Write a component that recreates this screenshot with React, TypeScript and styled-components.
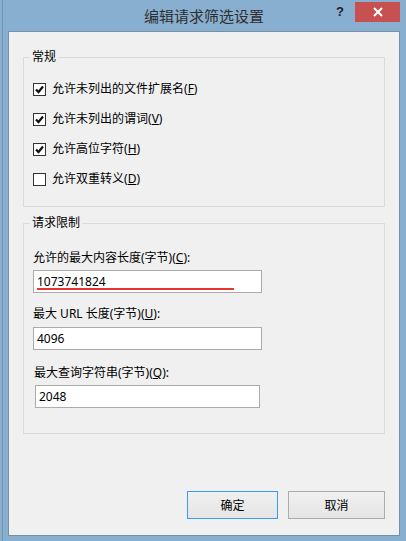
import React from 'react'
import styled, { createGlobalStyle } from 'styled-components';

const Global = createGlobalStyle`
    html, body {
        margin: 0;
        padding: 0;
    }

    body {
        font-family: "Noto Sans", "Noto Sans CJK SC", sans-serif;
        font-size: 12px;
        color: #000;
    }
`

const Frame = styled.div`
    width: 406px;
    height: 541px;
    box-sizing: border-box;
    padding: 0 6px 5px 8px;

    display: flex;
    flex-direction: column;

    background-color: #88afcf;
    background-image: linear-gradient(to right, transparent 2px, #7493ad 2px, #7493ad 3px, transparent 3px);
`

const TitleBar = styled.div`
    height: 31px;
    flex-shrink: 0;

    display: grid;
    grid-template-columns: 1fr auto 1fr;
`

const Title = styled.div`
    grid-column: 2;
    align-self: center;
    margin-top: 1px;

    font-size: 15px;
    line-height: 20px;
    color: #2e2e2e;
`

const Controls = styled.div`
    grid-column: 3;
    justify-self: end;

    display: flex;
    align-items: flex-start;
`

const Help = styled.span`
    margin: 5px 11px 0 0;

    font-family: "Liberation Sans", sans-serif;
    font-weight: bold;
    font-size: 13px;
    line-height: 14px;
    color: #1e1e1e;
`

const Close = styled.div`
    width: 45px;
    height: 20px;
    margin-top: 2px;

    display: flex;
    align-items: center;
    justify-content: center;

    background: #c75050;
`

const Client = styled.div`
    flex: 1;
    box-sizing: border-box;
    padding: 17px 14px 16px 14px;

    display: flex;
    flex-direction: column;

    background: #f0f0f0;
    border: 1px solid #7890a6;
`

const Group = styled.fieldset<{ $pad: string; $top?: number }>`
    margin: ${p => p.$top ?? 0}px 0 0 0;
    padding: ${p => p.$pad};
    min-width: 0;

    border: 1px solid #dcdcdc;
    border-radius: 0;
`

const Legend = styled.legend`
    margin-left: -3px;
    padding: 0 2px;

    line-height: 16px;
`

const CheckRow = styled.label`
    height: 30px;

    display: flex;
    align-items: center;
    gap: 6px;

    line-height: 16px;
`

const Box = styled.span`
    width: 11px;
    height: 11px;

    display: flex;
    align-items: center;
    justify-content: center;

    background: #fff;
    border: 1px solid #333;
`

const Field = styled.div<{ $top: number; $shift?: number }>`
    margin-top: ${p => p.$top}px;
    padding-left: ${p => p.$shift ?? 0}px;
`

const FieldLabel = styled.div<{ $gap: number }>`
    margin-bottom: ${p => p.$gap}px;

    line-height: 16px;
`

const InputWrap = styled.div<{ $width: number; $indent?: number }>`
    position: relative;
    width: ${p => p.$width}px;
    height: 23px;
    box-sizing: border-box;
    margin-left: ${p => p.$indent ?? 0}px;
    padding: 0 3px;

    display: flex;
    align-items: center;

    background: #fff;
    border: 1px solid #ababab;
`

const Mark = styled.span`
    position: absolute;
    left: 3px;
    top: 17px;

    width: 197px;
    height: 2px;

    background: #e8362f;
`

const Footer = styled.div`
    margin-top: auto;

    display: flex;
    justify-content: flex-end;
    gap: 10px;
`

const Button = styled.div<{ $width: number; $focus?: boolean }>`
    width: ${p => p.$width}px;
    height: 28px;
    box-sizing: border-box;

    display: flex;
    align-items: center;
    justify-content: center;

    background: linear-gradient(#f0f0f0, #e5e5e5);
    border: 1px solid ${p => (p.$focus ? '#3c99f8' : '#acacac')};
`

function Check({ on }: { on: boolean }) {
    return (
        <Box>
            {on && (
                <svg width="9" height="9" viewBox="0 0 9 9">
                    <path d="M1 4.5 L3.5 7 L8 1.5" fill="none" stroke="#111" strokeWidth="2.2" />
                </svg>
            )}
        </Box>
    )
}

const options: [string, string, boolean][] = [
    ['允许未列出的文件扩展名', 'F', true],
    ['允许未列出的谓词', 'V', true],
    ['允许高位字符', 'H', true],
    ['允许双重转义', 'D', false],
]

export default function App() {
    return (
        <Frame>
            <Global />
            <TitleBar>
                <Title>编辑请求筛选设置</Title>
                <Controls>
                    <Help>?</Help>
                    <Close>
                        <svg width="10" height="10" viewBox="0 0 10 10">
                            <path d="M1 1 L9 9 M9 1 L1 9" stroke="#fff" strokeWidth="2" />
                        </svg>
                    </Close>
                </Controls>
            </TitleBar>

            <Client>
                <Group $pad="9px 9px 12px 9px">
                    <Legend>常规</Legend>
                    {options.map(([text, key, on]) => (
                        <CheckRow key={key}>
                            <Check on={on} />
                            <span>{text}(<u>{key}</u>)</span>
                        </CheckRow>
                    ))}
                </Group>

                <Group $pad="0 9px 25px 9px" $top={8}>
                    <Legend>请求限制</Legend>
                    <Field $top={19}>
                        <FieldLabel $gap={4}>允许的最大内容长度(字节)(<u>C</u>):</FieldLabel>
                        <InputWrap $width={229}>
                            1073741824
                            <Mark />
                        </InputWrap>
                    </Field>
                    <Field $top={13}>
                        <FieldLabel $gap={5}>最大 URL 长度(字节)(<u>U</u>):</FieldLabel>
                        <InputWrap $width={229}>4096</InputWrap>
                    </Field>
                    <Field $top={15} $shift={1}>
                        <FieldLabel $gap={4}>最大查询字符串(字节)(<u>Q</u>):</FieldLabel>
                        <InputWrap $width={225} $indent={1}>2048</InputWrap>
                    </Field>
                </Group>

                <Footer>
                    <Button $width={91} $focus>确定</Button>
                    <Button $width={97}>取消</Button>
                </Footer>
            </Client>
        </Frame>
    )
}
